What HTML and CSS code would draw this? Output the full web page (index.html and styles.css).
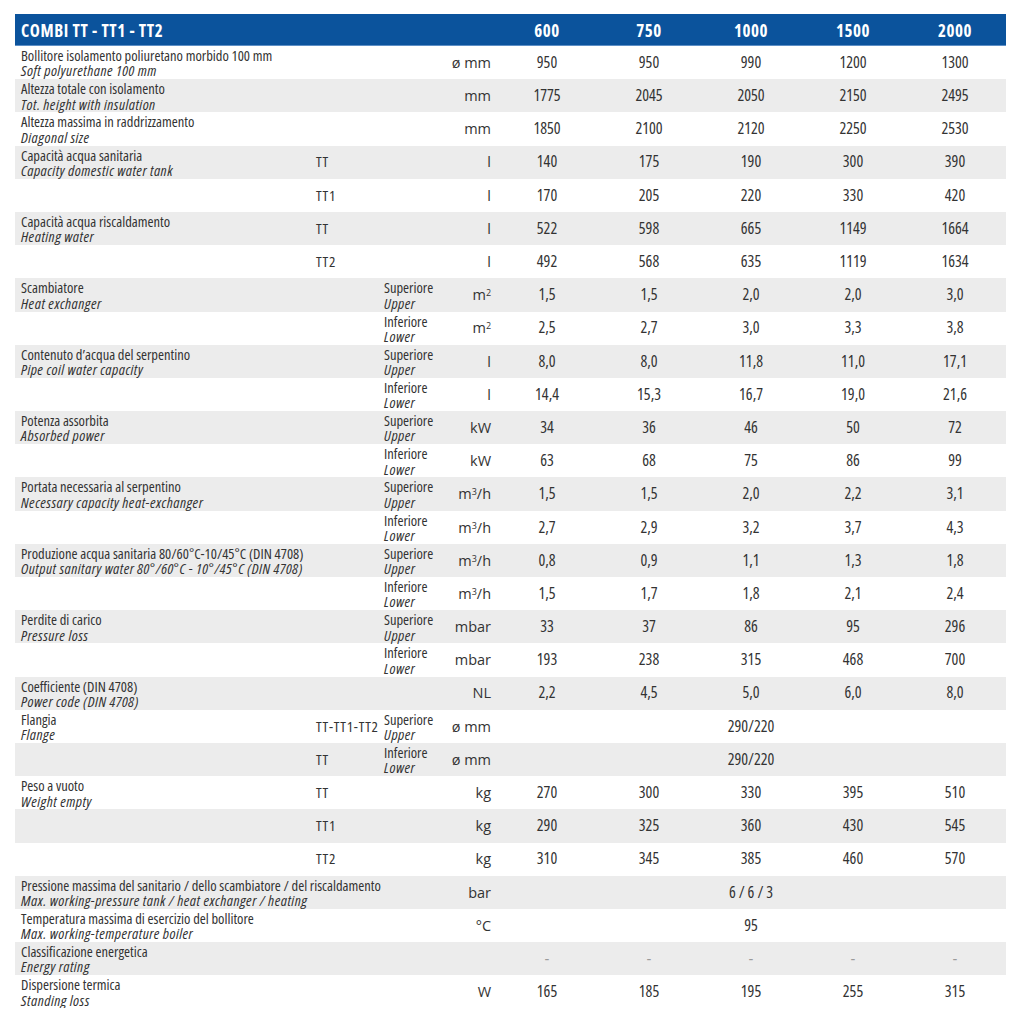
FILE: index.html
```html
<!DOCTYPE html>
<html lang="it">
<head>
<meta charset="utf-8">
<title>COMBI TT - TT1 - TT2</title>
<link rel="stylesheet" href="styles.css">
</head>
<body>
<table class="spec">
<colgroup>
<col class="c-lbl"><col class="c-var"><col class="c-pos"><col class="c-unit">
<col class="c-val"><col class="c-val"><col class="c-val"><col class="c-val"><col class="c-val">
</colgroup>
<thead>
<tr class="head">
<th class="title" colspan="4">COMBI TT - TT1 - TT2</th>
<th>600</th><th>750</th><th>1000</th><th>1500</th><th>2000</th>
</tr>
</thead>
<tbody>
<tr><td class="lbl" colspan="3"><div>Bollitore isolamento poliuretano morbido 100 mm</div><div class="en">Soft polyurethane 100 mm</div></td><td class="unit">ø mm</td><td>950</td><td>950</td><td>990</td><td>1200</td><td>1300</td></tr>
<tr><td class="lbl" colspan="3"><div>Altezza totale con isolamento</div><div class="en">Tot. height with insulation</div></td><td class="unit">mm</td><td>1775</td><td>2045</td><td>2050</td><td>2150</td><td>2495</td></tr>
<tr><td class="lbl" colspan="3"><div>Altezza massima in raddrizzamento</div><div class="en">Diagonal size</div></td><td class="unit">mm</td><td>1850</td><td>2100</td><td>2120</td><td>2250</td><td>2530</td></tr>
<tr><td class="lbl"><div>Capacità acqua sanitaria</div><div class="en">Capacity domestic water tank</div></td><td class="var">TT</td><td></td><td class="unit">l</td><td>140</td><td>175</td><td>190</td><td>300</td><td>390</td></tr>
<tr><td class="lbl"></td><td class="var">TT1</td><td></td><td class="unit">l</td><td>170</td><td>205</td><td>220</td><td>330</td><td>420</td></tr>
<tr><td class="lbl"><div>Capacità acqua riscaldamento</div><div class="en">Heating water</div></td><td class="var">TT</td><td></td><td class="unit">l</td><td>522</td><td>598</td><td>665</td><td>1149</td><td>1664</td></tr>
<tr><td class="lbl"></td><td class="var">TT2</td><td></td><td class="unit">l</td><td>492</td><td>568</td><td>635</td><td>1119</td><td>1634</td></tr>
<tr><td class="lbl" colspan="2"><div>Scambiatore</div><div class="en">Heat exchanger</div></td><td class="pos"><div>Superiore</div><div class="en">Upper</div></td><td class="unit">m<sup>2</sup></td><td>1,5</td><td>1,5</td><td>2,0</td><td>2,0</td><td>3,0</td></tr>
<tr><td class="lbl" colspan="2"></td><td class="pos"><div>Inferiore</div><div class="en">Lower</div></td><td class="unit">m<sup>2</sup></td><td>2,5</td><td>2,7</td><td>3,0</td><td>3,3</td><td>3,8</td></tr>
<tr><td class="lbl" colspan="2"><div>Contenuto d’acqua del serpentino</div><div class="en">Pipe coil water capacity</div></td><td class="pos"><div>Superiore</div><div class="en">Upper</div></td><td class="unit">l</td><td>8,0</td><td>8,0</td><td>11,8</td><td>11,0</td><td>17,1</td></tr>
<tr><td class="lbl" colspan="2"></td><td class="pos"><div>Inferiore</div><div class="en">Lower</div></td><td class="unit">l</td><td>14,4</td><td>15,3</td><td>16,7</td><td>19,0</td><td>21,6</td></tr>
<tr><td class="lbl" colspan="2"><div>Potenza assorbita</div><div class="en">Absorbed power</div></td><td class="pos"><div>Superiore</div><div class="en">Upper</div></td><td class="unit">kW</td><td>34</td><td>36</td><td>46</td><td>50</td><td>72</td></tr>
<tr><td class="lbl" colspan="2"></td><td class="pos"><div>Inferiore</div><div class="en">Lower</div></td><td class="unit">kW</td><td>63</td><td>68</td><td>75</td><td>86</td><td>99</td></tr>
<tr><td class="lbl" colspan="2"><div>Portata necessaria al serpentino</div><div class="en">Necessary capacity heat-exchanger</div></td><td class="pos"><div>Superiore</div><div class="en">Upper</div></td><td class="unit">m<sup>3</sup>/h</td><td>1,5</td><td>1,5</td><td>2,0</td><td>2,2</td><td>3,1</td></tr>
<tr><td class="lbl" colspan="2"></td><td class="pos"><div>Inferiore</div><div class="en">Lower</div></td><td class="unit">m<sup>3</sup>/h</td><td>2,7</td><td>2,9</td><td>3,2</td><td>3,7</td><td>4,3</td></tr>
<tr><td class="lbl" colspan="2"><div>Produzione acqua sanitaria 80/60°C-10/45°C (DIN 4708)</div><div class="en">Output sanitary water 80°/60°C - 10°/45°C (DIN 4708)</div></td><td class="pos"><div>Superiore</div><div class="en">Upper</div></td><td class="unit">m<sup>3</sup>/h</td><td>0,8</td><td>0,9</td><td>1,1</td><td>1,3</td><td>1,8</td></tr>
<tr><td class="lbl" colspan="2"></td><td class="pos"><div>Inferiore</div><div class="en">Lower</div></td><td class="unit">m<sup>3</sup>/h</td><td>1,5</td><td>1,7</td><td>1,8</td><td>2,1</td><td>2,4</td></tr>
<tr><td class="lbl" colspan="2"><div>Perdite di carico</div><div class="en">Pressure loss</div></td><td class="pos"><div>Superiore</div><div class="en">Upper</div></td><td class="unit">mbar</td><td>33</td><td>37</td><td>86</td><td>95</td><td>296</td></tr>
<tr><td class="lbl" colspan="2"></td><td class="pos"><div>Inferiore</div><div class="en">Lower</div></td><td class="unit">mbar</td><td>193</td><td>238</td><td>315</td><td>468</td><td>700</td></tr>
<tr><td class="lbl" colspan="3"><div>Coefficiente (DIN 4708)</div><div class="en">Power code (DIN 4708)</div></td><td class="unit">NL</td><td>2,2</td><td>4,5</td><td>5,0</td><td>6,0</td><td>8,0</td></tr>
<tr><td class="lbl"><div>Flangia</div><div class="en">Flange</div></td><td class="var">TT-TT1-TT2</td><td class="pos"><div>Superiore</div><div class="en">Upper</div></td><td class="unit">ø mm</td><td colspan="5">290/220</td></tr>
<tr><td class="lbl"></td><td class="var">TT</td><td class="pos"><div>Inferiore</div><div class="en">Lower</div></td><td class="unit">ø mm</td><td colspan="5">290/220</td></tr>
<tr><td class="lbl"><div>Peso a vuoto</div><div class="en">Weight empty</div></td><td class="var">TT</td><td></td><td class="unit">kg</td><td>270</td><td>300</td><td>330</td><td>395</td><td>510</td></tr>
<tr><td class="lbl"></td><td class="var">TT1</td><td></td><td class="unit">kg</td><td>290</td><td>325</td><td>360</td><td>430</td><td>545</td></tr>
<tr><td class="lbl"></td><td class="var">TT2</td><td></td><td class="unit">kg</td><td>310</td><td>345</td><td>385</td><td>460</td><td>570</td></tr>
<tr><td class="lbl" colspan="3"><div>Pressione massima del sanitario / dello scambiatore / del riscaldamento</div><div class="en">Max. working-pressure tank / heat exchanger / heating</div></td><td class="unit">bar</td><td colspan="5">6 / 6 / 3</td></tr>
<tr><td class="lbl" colspan="3"><div>Temperatura massima di esercizio del bollitore</div><div class="en">Max. working-temperature boiler</div></td><td class="unit">°C</td><td colspan="5">95</td></tr>
<tr><td class="lbl" colspan="3"><div>Classificazione energetica</div><div class="en">Energy rating</div></td><td class="unit"></td><td class="na">-</td><td class="na">-</td><td class="na">-</td><td class="na">-</td><td class="na">-</td></tr>
<tr><td class="lbl" colspan="3"><div>Dispersione termica</div><div class="en">Standing loss</div></td><td class="unit">W</td><td>165</td><td>185</td><td>195</td><td>255</td><td>315</td></tr>
</tbody>
</table>
</body>
</html>
```
FILE: styles.css
```css
html, body {
  margin: 0;
  padding: 0;
  background: #ffffff;
}
body {
  padding: 14px 0 0 15px;
  font-family: "Open Sans", "Liberation Sans", Arial, sans-serif;
  font-stretch: 75%;
  font-weight: 400;
  color: #333333;
}
.spec {
  border-collapse: collapse;
  table-layout: fixed;
  width: 991px;
}
.c-lbl { width: 296px; }
.c-var { width: 70px; }
.c-pos { width: 56px; }
.c-unit { width: 59px; }
.c-val { width: 102px; }

.head th {
  height: 32px;
  padding: 0;
  background: #0b539c;
  color: #ffffff;
  font-size: 17px;
  letter-spacing: 0.6px;
  font-weight: bold;
  text-align: center;
  vertical-align: middle;
  box-shadow: inset 0 -1px 0 #5d8fc6;
}
.head th.title {
  text-align: left;
  padding-left: 6px;
}

.spec tbody tr {
  height: 33.2px;
}
.spec tbody tr:nth-child(even) td {
  background: #ececec;
}
.spec td {
  padding: 0;
  font-size: 16px;
  text-align: center;
  vertical-align: middle;
  white-space: nowrap;
  line-height: 15.4px;
  overflow: visible;
}
.spec td.lbl {
  text-align: left;
  vertical-align: top;
  padding: 2px 0 0 6px;
  font-size: 14.5px;
}
.spec td.var {
  text-align: left;
  padding-left: 5px;
  font-size: 15px;
  letter-spacing: 0.8px;
}
.spec td.pos {
  text-align: left;
  vertical-align: top;
  padding: 2px 0 0 3px;
  font-size: 14.5px;
}
.spec td.unit {
  text-align: right;
  padding-right: 5px;
  font-size: 14.5px;
  font-stretch: 100%;
}
.en {
  font-style: italic;
  font-size: 15px;
  letter-spacing: 0.45px;
}
sup {
  font-size: 0.62em;
  line-height: 0;
  vertical-align: 0.5em;
}
.spec td.na {
  color: #9a9a9a;
}
```
